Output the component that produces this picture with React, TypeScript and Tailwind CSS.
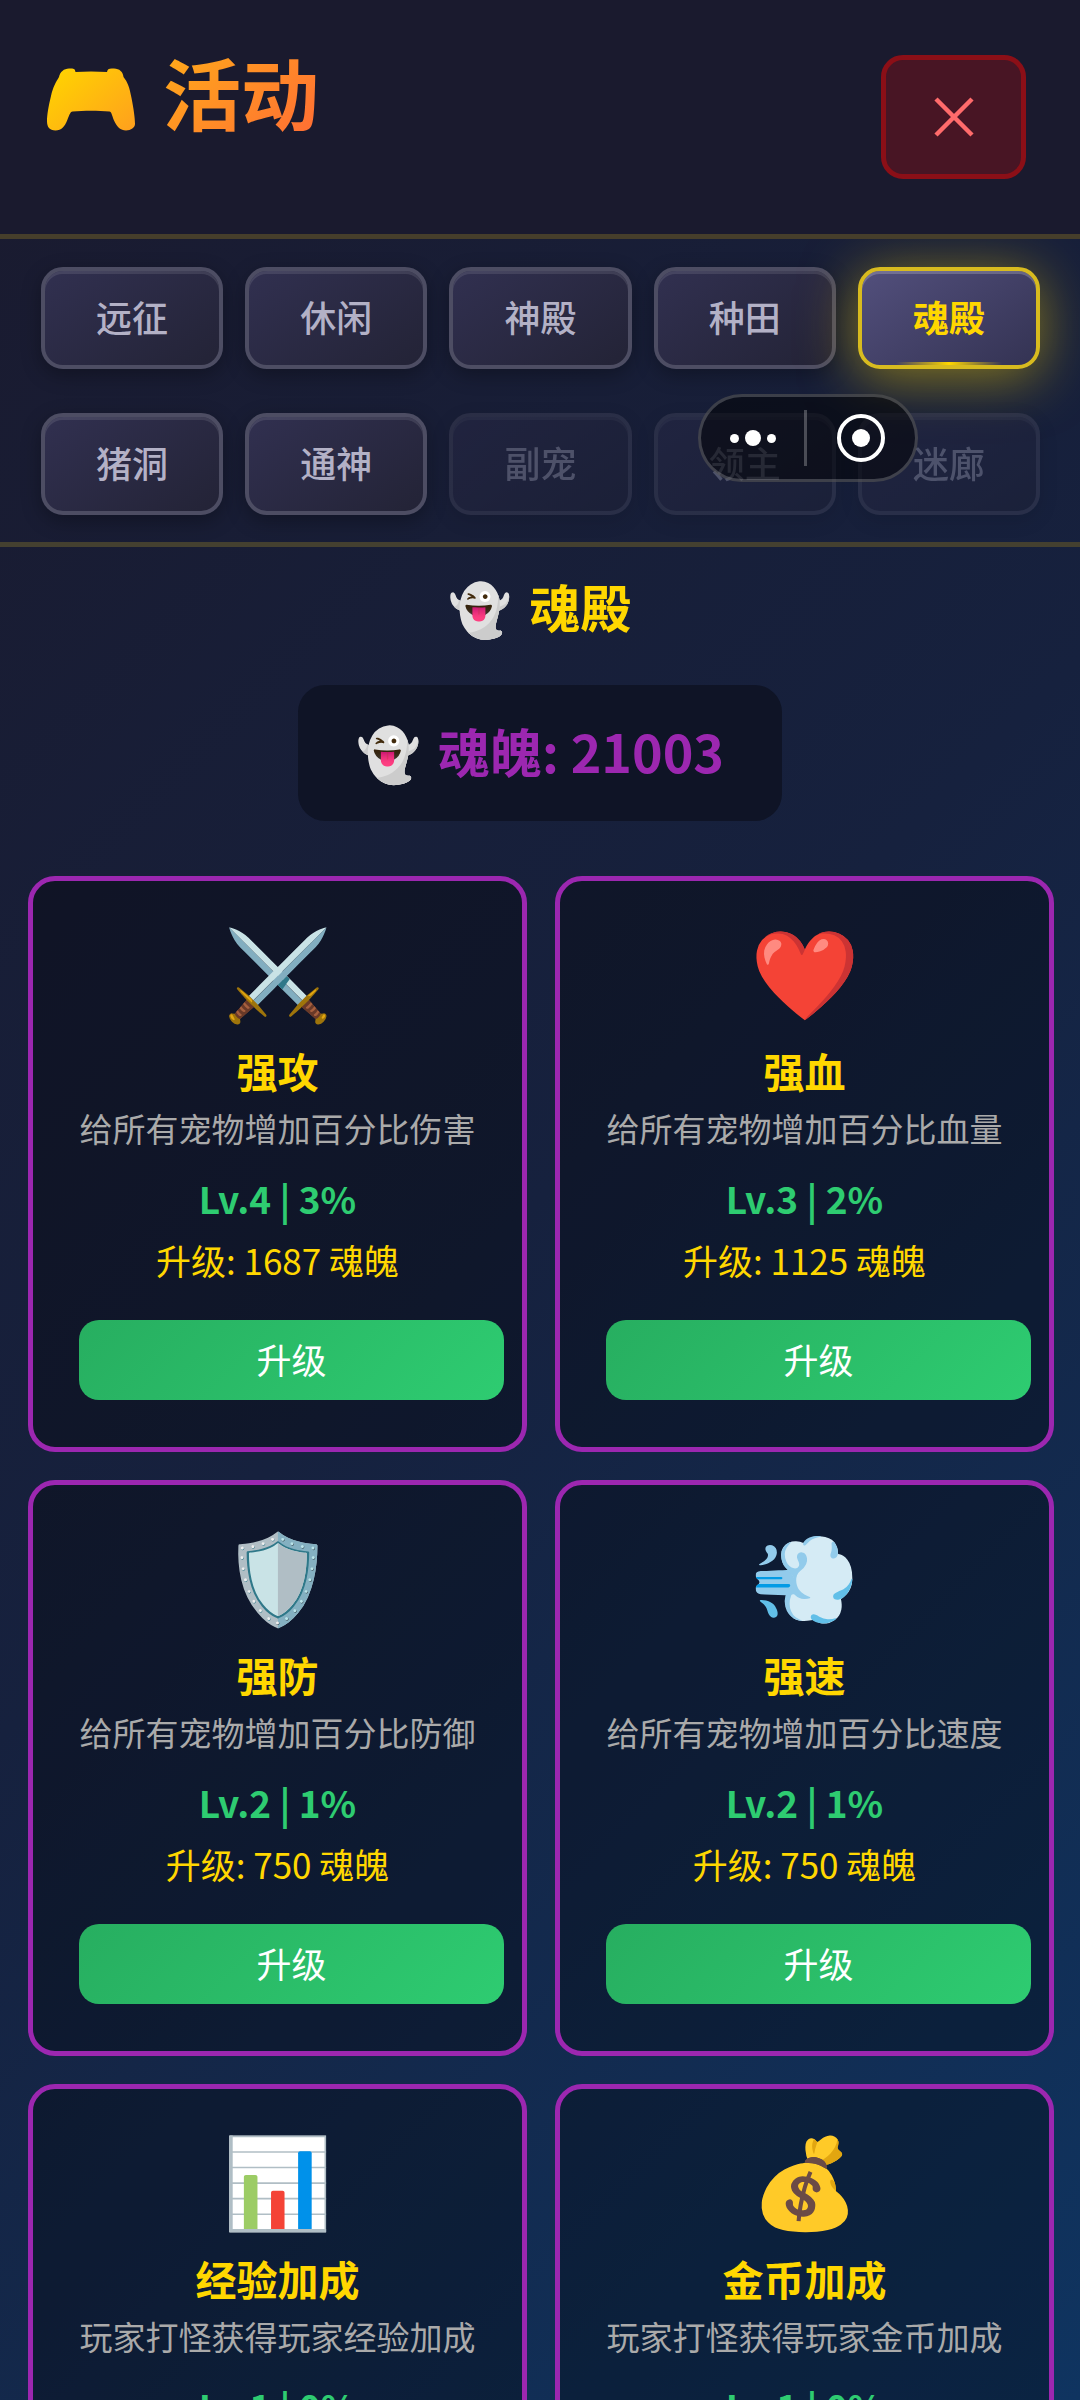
import { useState } from 'react';

const tabs = [
  { name: '远征' },
  { name: '休闲' },
  { name: '神殿' },
  { name: '种田' },
  { name: '魂殿' },
  { name: '猪洞' },
  { name: '通神' },
  { name: '副宠', locked: true },
  { name: '领主', locked: true },
  { name: '迷廊', locked: true },
];

const upgrades = [
  { icon: '⚔️', name: '强攻', desc: '给所有宠物增加百分比伤害', level: 4, bonus: 3, cost: 1687 },
  { icon: '❤️', name: '强血', desc: '给所有宠物增加百分比血量', level: 3, bonus: 2, cost: 1125 },
  { icon: '🛡️', name: '强防', desc: '给所有宠物增加百分比防御', level: 2, bonus: 1, cost: 750 },
  { icon: '💨', name: '强速', desc: '给所有宠物增加百分比速度', level: 2, bonus: 1, cost: 750 },
  { icon: '📊', name: '经验加成', desc: '玩家打怪获得玩家经验加成', level: 1, bonus: 0, cost: 500 },
  { icon: '💰', name: '金币加成', desc: '玩家打怪获得玩家金币加成', level: 1, bonus: 0, cost: 500 },
];

function Gamepad() {
  return (
    <svg viewBox="0 0 100 100" className="w-[100px] h-[100px]" aria-hidden="true">
      <defs>
        <linearGradient id="pad" x1="0" y1="0.1" x2="1" y2="0.9">
          <stop offset="0" stopColor="#ffd400" />
          <stop offset="1" stopColor="#ffa21c" />
        </linearGradient>
      </defs>
      <path
        fill="url(#pad)"
        d="M18 36c1-5 5-8.500 10-8.500 5-.5 6 .5 6.500 3.500 10-.8 21-.8 31.500 0 .5-3 2-4 7-3.500 5.500 0 9 3.500 9.500 8.500 4 5 6 10 8 21 2 10 3.500 20 3.500 26 0 3.500-4 6.500-9 6.500-5.500 0-9-3.500-12-10-2-5-2.500-9-4.500-9-11-1-26-1-37 0-2 0-3 3-5 8-3 7.500-6 11-12 11S6 86 6 80c0-6 1.500-15 4-25 2-9 5-14 8-19z"
      />
    </svg>
  );
}

function Capsule() {
  return (
    <div className="absolute top-[394px] right-[162px] flex h-[88px] w-[220px] items-center rounded-full border-[3px] border-white/20 bg-black/50">
      <button aria-label="更多" className="flex w-[103px] items-center justify-center gap-[6px]">
        <span className="h-[9px] w-[9px] rounded-full bg-white" />
        <span className="h-4 w-4 rounded-full bg-white" />
        <span className="h-[9px] w-[9px] rounded-full bg-white" />
      </button>
      <span className="h-14 w-[3px] bg-white/25" />
      <button aria-label="关闭小程序" className="flex flex-1 items-center justify-center">
        <span className="flex h-12 w-12 items-center justify-center rounded-full border-4 border-white">
          <span className="h-[18px] w-[18px] rounded-full bg-white" />
        </span>
      </button>
    </div>
  );
}

export default function App() {
  const [active, setActive] = useState('魂殿');

  return (
    <div className="relative flex h-screen flex-col overflow-hidden bg-[linear-gradient(135deg,#1a1a2e_0%,#16213e_50%,#0f3460_100%)] font-['Noto_Sans_CJK_SC',sans-serif]">
      <header className="flex items-start justify-between border-b-[5px] border-[#463e2b] bg-[#1a1a2e] py-[41px] pr-10 pl-[41px]">
        <h1 className="flex items-center gap-[22px] text-[78px] leading-[100px] font-bold">
          <Gamepad />
          <span className="bg-[linear-gradient(135deg,#ffae18,#ff6b35)] bg-clip-text text-transparent">活动</span>
        </h1>
        <button
          aria-label="关闭"
          className="m-[14px] flex h-[124px] w-[145px] items-center justify-center rounded-[22px] border-[5px] border-[#8b0f17] bg-[#481524]"
        >
          <svg viewBox="0 0 40 40" className="h-10 w-10" fill="none" stroke="#ff6b6b" strokeWidth="4.5" aria-hidden="true">
            <path d="M2 2l36 36M38 2L2 38" />
          </svg>
        </button>
      </header>

      <nav className="grid grid-cols-5 gap-x-[22px] gap-y-11 overflow-hidden border-b-[5px] border-[#444030] pt-7 pr-10 pb-[27px] pl-[41px]">
        {tabs.map((tab) => {
          const isActive = tab.name === active;
          return (
            <button
              key={tab.name}
              disabled={tab.locked}
              onClick={() => setActive(tab.name)}
              className={`relative h-[102px] rounded-[22px] border-4 pb-1 text-[36px] ${
                isActive
                  ? 'border-[#d8bb1f] bg-[linear-gradient(145deg,#524f7c,#343353)] font-bold text-[#ffd700] shadow-[0_8px_56px_rgba(255,215,0,0.5),inset_0_3px_0_rgba(255,255,255,0.2)]'
                  : 'border-[#4d4d63] bg-[linear-gradient(145deg,#313050,#232336)] font-medium text-[#b3b1c6] shadow-[0_6px_20px_rgba(0,0,0,0.3),inset_0_3px_0_rgba(255,255,255,0.1)]'
              } ${tab.locked ? 'opacity-35' : ''}`}
            >
              {tab.name}
              {isActive && (
                <span className="absolute inset-x-[34px] bottom-0 h-[3px] bg-linear-to-r from-transparent via-[#ffd700] to-transparent" />
              )}
            </button>
          );
        })}
      </nav>

      <main className="flex flex-1 flex-col items-center overflow-y-auto pt-[25px] [scrollbar-width:none]">
        <h2 className="flex items-center gap-[17px] text-[51px] leading-[68px] font-bold text-[#ffd700]">
          <span>👻</span>
          魂殿
        </h2>

        <div className="mt-[45px] flex h-[136px] shrink-0 items-center gap-[17px] rounded-[27px] bg-[#0f1426] px-[58px] pb-1 text-[52px] font-bold text-[#9c27b0]">
          <span>👻</span>
          魂魄: 21003
        </div>

        <div className="mt-[55px] grid w-full grid-cols-2 gap-7 pr-[26px] pl-7">
          {upgrades.map((item) => (
            <section
              key={item.name}
              className="rounded-[27px] border-[5px] border-[#9c27b0] bg-black/30 p-8 text-center"
            >
              <div className="mb-4 flex h-[110px] items-center justify-center text-[88px]">{item.icon}</div>
              <h3 className="text-[41px] leading-[62px] font-bold text-[#ffd700]">{item.name}</h3>
              <p className="text-[33px] leading-[54px] whitespace-nowrap text-[#aaaaaa]">{item.desc}</p>
              <p className="mt-[18px] text-[37px] leading-[50px] font-bold text-[#2ecc71]">
                Lv.{item.level} | {item.bonus}%
              </p>
              <p className="mt-3 text-[35px] leading-[50px] text-[#ffd700]">升级: {item.cost} 魂魄</p>
              <button className="mt-[35px] mb-[15px] ml-[14px] h-20 w-full rounded-[20px] bg-[linear-gradient(135deg,#27ae60,#2ecc71)] pb-[2px] text-[35px] text-white">
                升级
              </button>
            </section>
          ))}
        </div>
      </main>

      <Capsule />
    </div>
  );
}
